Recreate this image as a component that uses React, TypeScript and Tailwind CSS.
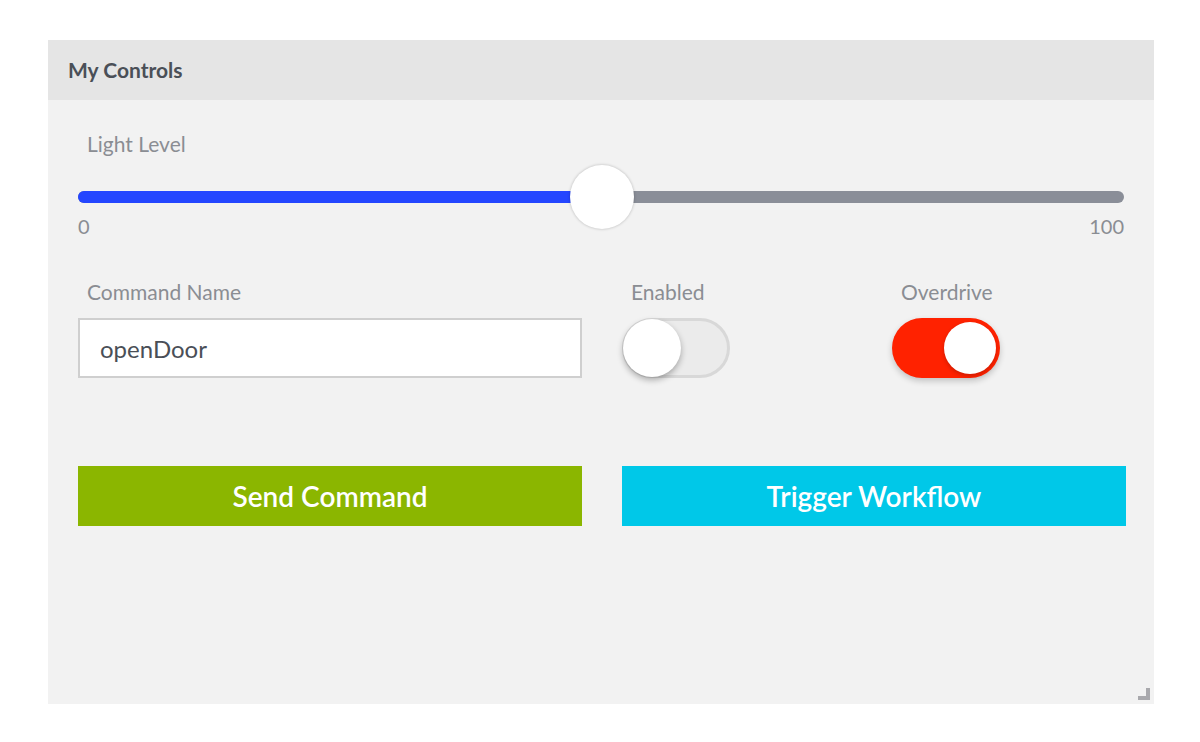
export default function App() {
  const value = 50
  const trackW = 1046
  return (
    <div className="w-[1200px] h-[742px] bg-white pt-[40px] pl-[48px]" style={{ fontFamily: 'Lato, "Open Sans", sans-serif' }}>
      <div className="w-[1106px] h-[664px] bg-[#f2f2f2] flex flex-col relative">
        {/* Header */}
        <div className="h-[60px] bg-[#e5e5e5] flex items-center px-[20px]">
          <span className="text-[21px] font-bold text-[#4a4f57]">My Controls</span>
        </div>

        <div className="pl-[30px] pr-[28px] pt-[30px]">
          {/* Slider */}
          <div className="pl-[9px] text-[21px] text-[#8a8d93] leading-[28px]">Light Level</div>
          <div className="relative h-[64px] mt-[7px] w-[1046px]">
            <div className="absolute left-0 right-0 top-[26px] h-[12px] rounded-full bg-[#8a8e98]" />
            <div className="absolute left-0 top-[26px] h-[12px] rounded-l-full bg-[#2446ff]" style={{ width: `${(value / 100) * trackW - 8}px` }} />
            <div
              className="absolute top-0 w-[64px] h-[64px] rounded-full bg-white shadow-[0_0_3px_rgba(0,0,0,0.25)]"
              style={{ left: `${(value / 100) * trackW - 31}px` }}
            />
          </div>
          <div className="flex justify-between w-[1046px] text-[20px] text-[#8a8d93] leading-[24px] -mt-[15px]">
            <span>0</span>
            <span>100</span>
          </div>

          {/* Row of inputs */}
          <div className="flex mt-[40px]">
            <div className="w-[504px] shrink-0">
              <div className="pl-[9px] text-[21px] text-[#8a8d93] leading-[28px]">Command Name</div>
              <input
                readOnly
                value="openDoor"
                className="mt-[12px] w-[504px] h-[60px] bg-white border-2 border-[#cfcfcf] px-[20px] text-[24px] text-[#4a4f57] outline-none"
                style={{ fontFamily: 'Lato, "Open Sans", sans-serif' }}
              />
            </div>
            <div className="ml-[40px] w-[270px] shrink-0">
              <div className="pl-[9px] text-[21px] text-[#8a8d93] leading-[28px]">Enabled</div>
              <div className="mt-[12px] w-[108px] h-[60px] rounded-full bg-[#ebebeb] border-[3px] border-[#d8d8d8] relative">
                <div className="absolute -left-[2px] -top-[2px] w-[58px] h-[58px] rounded-full bg-white shadow-[0_3px_6px_rgba(0,0,0,0.3)]" />
              </div>
            </div>
            <div className="shrink-0">
              <div className="pl-[9px] text-[21px] text-[#8a8d93] leading-[28px]">Overdrive</div>
              <div className="mt-[12px] w-[108px] h-[60px] rounded-full bg-[#ff2200] relative shadow-[0_3px_6px_rgba(0,0,0,0.2)]">
                <div className="absolute right-[4px] top-[4px] w-[52px] h-[52px] rounded-full bg-white shadow-[0_2px_4px_rgba(0,0,0,0.2)]" />
              </div>
            </div>
          </div>

          {/* Buttons */}
          <div className="flex gap-[40px] mt-[88px]">
            <button className="w-[504px] shrink-0 h-[60px] bg-[#8bb600] text-white text-[28px] font-semibold">Send Command</button>
            <button className="w-[504px] shrink-0 h-[60px] bg-[#00c8e8] text-white text-[28px] font-semibold">Trigger Workflow</button>
          </div>
        </div>

        {/* Resize handle */}
        <div className="absolute right-[4px] bottom-[4px] w-[12px] h-[12px] border-r-[4px] border-b-[4px] border-[#a9a9ad]" />
      </div>
    </div>
  )
}
